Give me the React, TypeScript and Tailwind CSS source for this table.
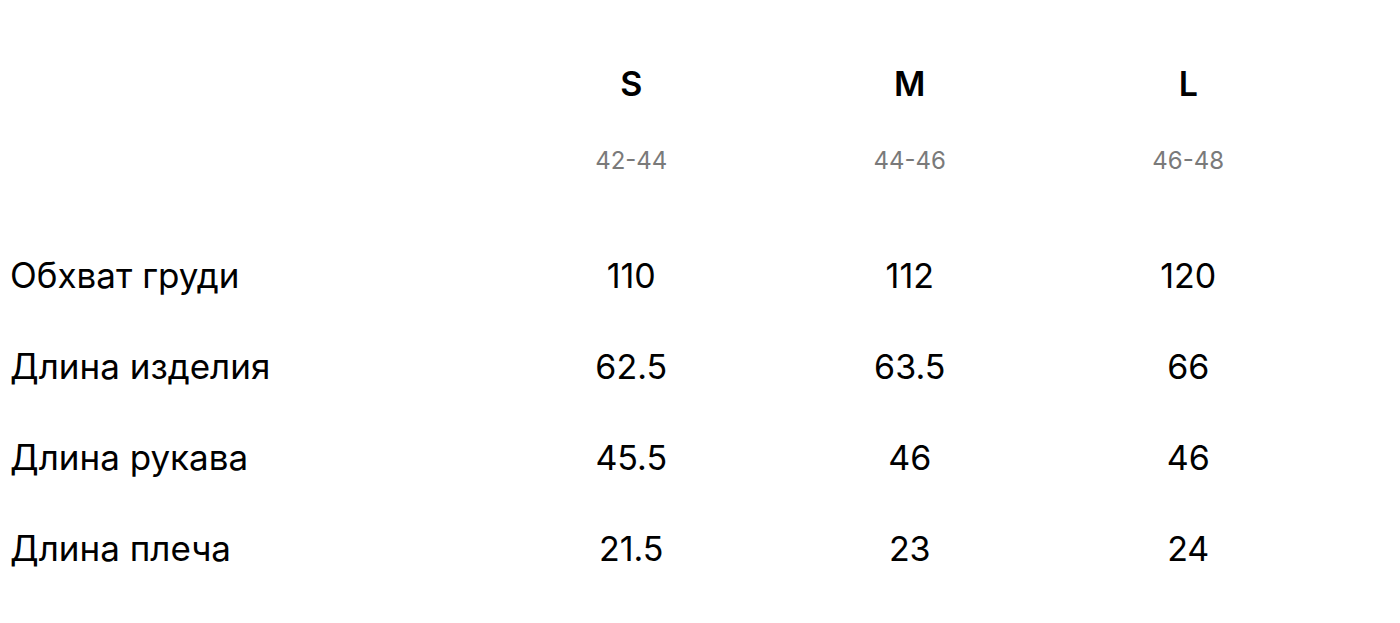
const sizes = [
  { name: "S", range: "42-44" },
  { name: "M", range: "44-46" },
  { name: "L", range: "46-48" },
];

const rows = [
  { label: "Обхват груди", values: ["110", "112", "120"] },
  { label: "Длина изделия", values: ["62.5", "63.5", "66"] },
  { label: "Длина рукава", values: ["45.5", "46", "46"] },
  { label: "Длина плеча", values: ["21.5", "23", "24"] },
];

export default function App() {
  return (
    <div className="min-h-screen bg-white px-[10px] pt-[40px] text-black font-['Inter',sans-serif]">
      <div className="grid grid-cols-[482px_278.5px_278.5px_278.5px]">
        <div className="h-[86px]" />
        {sizes.map((s) => (
          <div
            key={s.name}
            className="flex h-[86px] items-center justify-center text-[34px] font-semibold"
          >
            {s.name}
          </div>
        ))}
        <div className="h-[70px]" />
        {sizes.map((s) => (
          <div
            key={s.range}
            className="flex h-[70px] items-center justify-center text-[24px] text-[#7a7a7a]"
          >
            {s.range}
          </div>
        ))}
      </div>
      <div className="mt-[34px] grid grid-cols-[482px_278.5px_278.5px_278.5px]">
        {rows.map((r) => (
          <div key={r.label} className="contents">
            <div className="flex h-[91px] items-center text-[35px]">
              {r.label}
            </div>
            {r.values.map((v, i) => (
              <div
                key={i}
                className="flex h-[91px] items-center justify-center text-[34px]"
              >
                {v}
              </div>
            ))}
          </div>
        ))}
      </div>
    </div>
  );
}
